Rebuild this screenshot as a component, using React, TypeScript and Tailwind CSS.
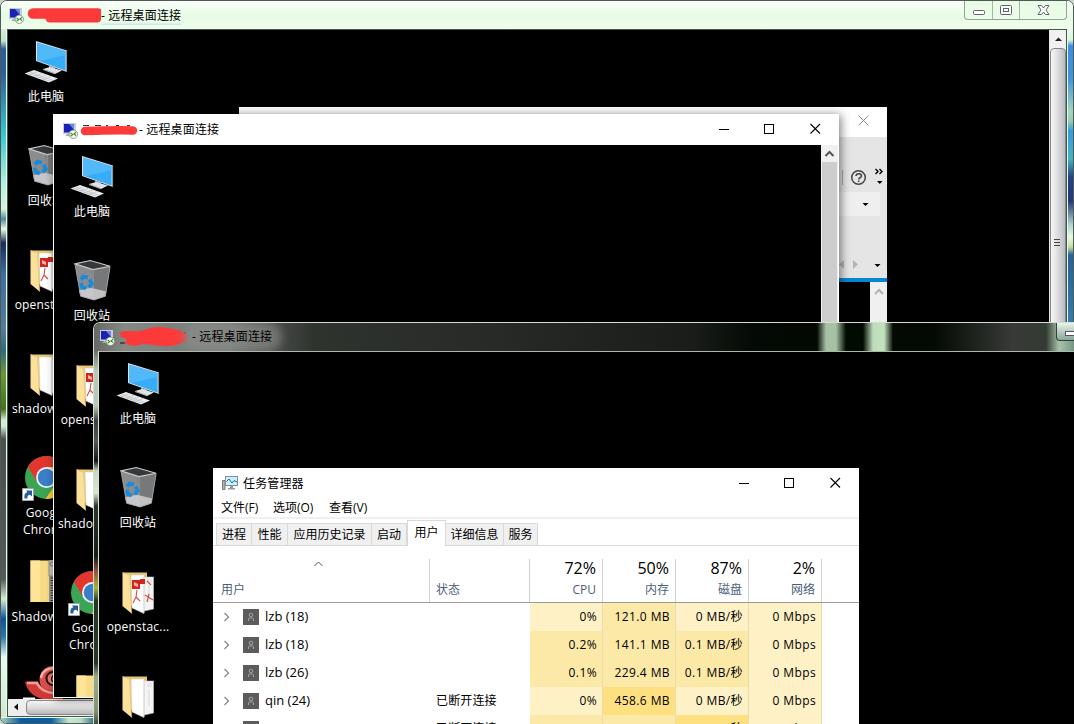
import React from "react";

const UI = "font-['Open_Sans','Noto_Sans_CJK_SC',sans-serif]";

function RdpIcon() {
  return (
    <svg width="17" height="17" viewBox="0 0 17 17" className="shrink-0">
      <rect x="1" y="1" width="13" height="11" fill="#c9ced6" />
      <rect x="2" y="2" width="10" height="8.500" fill="#1a22b5" />
      <path d="M7 2h5V8z" fill="#6f86e0" />
      <path d="M5 12h4v2H3z" fill="#a9afb8" />
      <circle cx="11.300" cy="12.300" r="4.200" fill="#f5fbf1" stroke="#7b8f74" strokeWidth=".8" />
      <path d="M8.600 11l2 1.600-2 1.600M14 10.300l-2 1.600 2 1.600" fill="none" stroke="#2f8a2b" strokeWidth="1.100" />
    </svg>
  );
}

function PcIcon() {
  return (
    <svg width="44" height="42" viewBox="0 0 44 42">
      <path d="M12 0L43 9.500V31L12 20z" fill="#d9e3ea" />
      <path d="M13 1.500L41.500 10V29.500L13 19.500z" fill="#37adf7" />
      <path d="M13 1.500L41.500 10V14L15 20.200L13 19.500z" fill="#5dbcfa" opacity=".7" />
      <path d="M42.500 9.500V31" stroke="#85929b" strokeWidth="1.200" />
      <path d="M25 24.500L31 26.500V29L25 27z" fill="#a8afb5" />
      <path d="M19 28L26 26L38 29.500L31 33z" fill="#dfe3e7" />
      <path d="M19 28L31 32V33.200L19 29z" fill="#a9afb5" />
      <path d="M0.500 32.500L10 29L34 37.500L25 41.500z" fill="#e9ecef" />
      <path d="M6 31.200L29 39.500M3.500 32L26.500 40.500M4.500 34L14 30.500M9 35.600L18.500 32.200M13.500 37.200L23 33.800M18 38.800L27.500 35.400" stroke="#b8bdc2" strokeWidth=".7" />
    </svg>
  );
}

function BinIcon() {
  return (
    <svg width="38" height="43" viewBox="0 0 40 43">
      <path d="M1 4L18 9.500L38 7L33 38L21 42L7 38z" fill="#8b8c8e" />
      <path d="M18 9.500L38 7L33 38L21 42z" fill="#77787a" />
      <path d="M1 4L17 0.500L38 6.500L20 10z" fill="#36383a" stroke="#c9cacc" strokeWidth="1.200" />
      <path d="M5 32L18 29L34 33L33 38L21 42L7 38z" fill="#dadbdd" opacity=".75" />
      <path d="M20 10V30" stroke="#a9aaac" strokeWidth=".8" />
      <path d="M1 4L7 38L21 42L33 38L38 7" fill="none" stroke="#a6a8aa" strokeWidth=".9" />
      <g fill="none" stroke="#168be0" strokeWidth="4">
        <path d="M7.500 20.500L10 17.500L14.500 18.500" />
        <path d="M16.500 20.500L18.500 25L15.500 28.500" />
        <path d="M12.500 30L8.500 28.500L7 24" />
      </g>
    </svg>
  );
}

function FolderIcon({ pdf = false }: { pdf?: boolean }) {
  return (
    <svg width="32" height="43" viewBox="0 0 32 43">
      <path d="M1 0.500H25V34H1z" fill="#e6c671" />
      <path d="M12 5L31.500 5V37L22 39L12 36z" fill="#f4f4f4" stroke="#c8c8c8" strokeWidth=".6" />
      <path d="M9 3H22V41.500L10 36z" fill="#fff" stroke="#c9c9c9" strokeWidth=".5" />
      <path d="M22 5V41M25 8H30M25 10H30M27 13V30" stroke="#d3d3d6" strokeWidth=".8" />
      {pdf && (
        <g>
          <path d="M10 8H18V17H10z" fill="#d3261c" />
          <path d="M18 7H23V12H18z" fill="#d3261c" />
          <path d="M12 10L16 12V15L12 13.500z" fill="#f5b1aa" />
          <path d="M15 18L14 25L11 31M14 25L18 29M25 9L29 13M23 23L31 28M27 22L25 30" fill="none" stroke="#d94b42" strokeWidth="1.100" />
        </g>
      )}
      <path d="M0.500 0.500L8 3L9.500 41.500L0.500 34z" fill="#fbe199" />
      <path d="M0.500 0.500L7.500 3.500L9.500 41.500" fill="none" stroke="#e7c778" strokeWidth=".8" />
    </svg>
  );
}

function ZipIcon() {
  return (
    <svg width="32" height="43" viewBox="0 0 32 43">
      <path d="M0.500 0.500H31V42H0.500z" fill="#f8db84" />
      <path d="M0.500 0.500H10V42H0.500z" fill="#fde499" />
      <path d="M19 0H26V42H19z" fill="#9b9b98" />
      <path d="M22.500 0V42" stroke="#333" strokeWidth="4" strokeDasharray="1 1.500" />
      <path d="M19 0H27V16H19z" fill="#c4c5c1" stroke="#777" strokeWidth=".7" />
      <circle cx="22" cy="4" r="2" fill="none" stroke="#777" />
    </svg>
  );
}

function ChromeIcon() {
  return (
    <svg width="48" height="46" viewBox="0 0 48 46">
      <g transform="translate(1.500 0)">
        <circle cx="23" cy="21.500" r="21.500" fill="#3aa655" />
        <path d="M4.400 10.700A21.500 21.500 0 0 1 41.700 11H24L13.500 26z" fill="#e2362f" />
        <path d="M23 11H41.700A21.500 21.500 0 0 1 22 43L33 26.500z" fill="#fbcb2c" />
        <circle cx="23" cy="21.500" r="10.500" fill="#f3f4f5" />
        <circle cx="23" cy="21.500" r="8.700" fill="#3b7fc9" />
      </g>
      <path d="M0.500 32.500H11.500V44.500H0.500z" fill="#fff" stroke="#9fa3a8" />
      <path d="M2.500 42.500C2 38 3.500 36.500 5.500 36.500L4 34.500H10V40.500L8 38.700C6 38.700 5 40 5.500 42.500z" fill="#245d9f" />
    </svg>
  );
}

function SnailIcon() {
  return (
    <svg width="46" height="46" viewBox="0 0 46 46">
      <circle cx="30" cy="13.500" r="13.500" fill="#d8504c" />
      <path d="M18 12C19 5 25 1.500 32 2.500" fill="none" stroke="#f3b1ad" strokeWidth="2.500" />
      <circle cx="30" cy="12.500" r="6.500" fill="#e87d78" stroke="#270c0b" strokeWidth="2" />
      <path d="M32 9A4 4 0 0 0 30 16" fill="none" stroke="#270c0b" strokeWidth="1.500" />
      <path d="M2 15.500H15C17 21 22 25 40 25V34C20 36 5 31 2 15.500z" fill="#cf3a37" />
      <path d="M4 17H14C17 24 25 28 40 28" fill="none" stroke="#f19b96" strokeWidth="2.500" />
      <path d="M0 31.500H12V44H0z" fill="#fff" />
      <path d="M3 35H9V41" fill="none" stroke="#245d9f" strokeWidth="2" />
    </svg>
  );
}

type Item = { icon: React.ReactNode; label: string; second?: string; pad: string };

const items: Item[] = [
  { icon: <PcIcon />, label: "此电脑", pad: "pt-[11px] pr-px" },
  { icon: <BinIcon />, label: "回收站", pad: "pt-[10px] pl-px" },
  { icon: <FolderIcon pdf />, label: "openstac...", pad: "pt-[12px]" },
  { icon: <FolderIcon />, label: "shadowso...", pad: "pt-[12px]" },
  { icon: <ChromeIcon />, label: "Google", second: "Chrome", pad: "pt-[10px]" },
  { icon: <ZipIcon />, label: "Shadowso...", pad: "pt-[10px]" },
  { icon: <SnailIcon />, label: "", pad: "pt-[12px]" },
];

function Desktop() {
  return (
    <div className="flex w-[76px] shrink-0 flex-col">
      {items.map((it, i) => (
        <div key={i} className="flex h-[104px] shrink-0 flex-col items-center">
          <div className={"flex h-[58px] shrink-0 justify-center " + it.pad}>{it.icon}</div>
          <div className="text-center text-[12px] leading-[17px] tracking-[0.2px] whitespace-nowrap text-white">
            {it.label}
            {it.second && <div>{it.second}</div>}
          </div>
        </div>
      ))}
    </div>
  );
}

function WinButtons() {
  return (
    <svg width="102" height="12" viewBox="0 0 102 12" className="shrink-0" fill="none" stroke="#000" shapeRendering="crispEdges">
      <path d="M0 6.500H10M45.500 1.500H54.500V10.500H45.500z" />
      <path d="M91.500 1L101 10.500M101 1L91.500 10.500" shapeRendering="auto" strokeWidth="1.100" />
    </svg>
  );
}

function OuterWindow() {
  return (
    <div className="absolute top-0 left-0 flex h-[724px] w-[1074px] flex-col overflow-hidden rounded-[7px] border border-[#4e5a54] bg-[#e6fbe4]">
      <div className="flex h-[28px] shrink-0 bg-gradient-to-b from-[#fbfffa] via-[#e8fbe6] to-[#effdeb] pl-[7px]">
        <div className="flex flex-1 items-center">
          <RdpIcon />
          <svg width="76" height="18" className="shrink-0">
            <path d="M8 7.500H73" stroke="#fd3a3a" strokeWidth="10.500" strokeLinecap="round" />
            <path d="M25 12H72" stroke="#fd3a3a" strokeWidth="9" strokeLinecap="round" />
          </svg>
          <span className="mt-px bg-[linear-gradient(transparent_85%,#c5e2ef)] text-[12px] tracking-[0.15px] whitespace-pre text-black">- 远程桌面连接</span>
        </div>
        <div className="mr-[6px] flex h-[19px] w-[103px] rounded-b-[4px] border border-t-0 border-[#93a396] bg-[#eafbe8]">
          <svg width="101" height="18" viewBox="0 0 101 18" fill="none" stroke="#5e6568">
            <path d="M27.500 0V18M54.500 0V18" stroke="#a6b5a8" />
            <rect x="8.500" y="9.500" width="11" height="4" rx="1" fill="#fff" />
            <rect x="35.500" y="4.500" width="11" height="9" rx="1" fill="#fff" />
            <rect x="38.500" y="7.500" width="5" height="3" />
            <path d="M73 4.500H76.500L78.500 7L80.500 4.500H84L81 9L84 13.500H80.500L78.500 11L76.500 13.500H73L76 9z" fill="#fff" />
          </svg>
        </div>
      </div>
      <div className="flex min-h-0 flex-1">
        <div className="w-[6px] shrink-0 border-r border-[#dfffee] bg-[linear-gradient(#d8efd5_0px,#c7e0cc_12px,#2d5c9b_20px,#315e99_45px,#38c7ce_105px,#b7eee2_155px,#d8f4df_180px,#4e8b9d_190px,#edfbe8_200px,#1c2b5b_214px,#3e6da4_245px,#557d99_300px,#2d6c77_322px,#6d9835_345px,#457219_380px,#d9ead0_391px,#d8ecd4_397px,#4d504f_410px,#555957_550px,#d9ecd2_570px,#0a539f_590px,#3077a9_608px,#e7faf0_628px,#d4e7cb_690px)]" />
        <div className="flex min-w-0 flex-1 flex-col border border-[#42564c]">
          <div className="flex min-h-0 flex-1 overflow-hidden bg-black">
            <Desktop />
            <div className="flex-1" />
            <div className="flex w-[17px] flex-col border-l border-[#e4e4e4] bg-[#f1f1f1]">
              <svg width="16" height="18"><path d="M5 11L8.500 7.500L12 11z" fill="#222" /></svg>
              <div className="flex flex-1 flex-col rounded-sm border border-[#858585] bg-gradient-to-r from-[#f7f7f7] via-[#dcdcde] to-[#b8bbc3] pt-[190px]">
                <svg width="14" height="10" stroke="#454545"><path d="M3 .5H9M3 3.500H9M3 6.500H9" /></svg>
              </div>
            </div>
          </div>
          <div className="flex h-[17px] shrink-0 bg-[#eeeeee]">
            <svg width="18" height="16"><path d="M10 4.500V11.500L6 8z" fill="#111" /></svg>
            <div className="my-px flex-1 rounded-sm border border-[#898989] bg-gradient-to-b from-[#f4f4f4] via-[#dcdcdc] to-[#b8b8b8]" />
          </div>
        </div>
        <div className="w-[6px] shrink-0 border-l border-[#dfffee] bg-[linear-gradient(#e6fbe2_0px,#dcf4d9_11px,#438dde_17px,#3f92dc_48px,#a4d4bf_82px,#9bcab4_92px,#379cdc_102px,#49b1c2_130px,#244384_148px,#263876_172px,#b2d3cf_196px,#e8fae4_208px,#c9d9a5_218px,#296198_226px,#347dac_295px)]" />
      </div>
      <div className="h-[6px] shrink-0 border-t border-[#dfffee] bg-[linear-gradient(90deg,#a9cfbd,#0a5d9e_20px,#0a5f9f_50px,#cbe7cc_68px,#bedcc4_80px,#225d88_95px)]" />
    </div>
  );
}

function BackWindow() {
  return (
    <div className="absolute top-[107px] left-[239px] flex h-[230px] w-[648px] flex-col bg-white">
      <div className="flex h-[30px] shrink-0 items-center justify-end bg-white pr-[18px] pb-[3px]">
        <svg width="11" height="11" stroke="#8e8e8e"><path d="M.5.500L10.500 10.500M10.500.500L.5 10.500" /></svg>
      </div>
      <div className="flex h-[141px] shrink-0 justify-end bg-[#e5e5e5]">
        <svg width="50" height="141" viewBox="0 0 50 141">
          <path d="M5.500 33V48" stroke="#aaa" />
          <circle cx="21.500" cy="40.500" r="6.800" fill="none" stroke="#444" strokeWidth="1.500" />
          <path d="M19 39C19 36 24.500 36 24.500 39C24.500 41 21.700 40.500 21.700 42.500M21.700 43.500V45" fill="none" stroke="#444" strokeWidth="1.500" />
          <path d="M38.500 32L41 34.500L38.500 37M42.500 32L45 34.500L42.500 37" fill="none" stroke="#000" strokeWidth="1.400" />
          <path d="M40 44H45.500L42.800 47z" fill="#000" />
          <path d="M0 55H43V79H0z" fill="#efefef" />
          <path d="M25.500 66H31.500L28.500 69zM37.500 127H43.500L40.500 130z" fill="#000" />
          <path d="M7 123V132L2 127.500zM16 123V132L21 127.500z" fill="#b5b5b5" />
        </svg>
      </div>
      <div className="h-[4px] shrink-0 bg-[#0786d8]" />
      <div className="flex flex-1 justify-end bg-black">
        <div className="flex w-[17px] justify-center bg-[#f0f0f0] pt-[6px]">
          <svg width="10" height="8" fill="none" stroke="#b2b2b2" strokeWidth="2"><path d="M1 6L5 2L9 6" /></svg>
        </div>
      </div>
    </div>
  );
}

function MiddleWindow() {
  return (
    <div className="absolute top-[114px] left-[53px] flex h-[584px] w-[786px] flex-col border border-white bg-white shadow-[2px_1px_9px_rgba(0,0,0,0.5)]">
      <div className="flex h-[30px] shrink-0 items-center pr-[17px] pl-[8px]">
        <RdpIcon />
        <svg width="60" height="18" className="shrink-0">
          <path d="M4 4.500H10M16 4.500H22M27 4.500H29M37 4.500H40M48 4.500H51" stroke="#333" />
          <path d="M6 10C20 10 38 8.500 54 9.500" fill="none" stroke="#fd3a3a" strokeWidth="8.500" strokeLinecap="round" />
        </svg>
        <span className="flex-1 text-[12px] tracking-[0.15px] whitespace-pre text-black">- 远程桌面连接</span>
        <div className="mb-[2px] flex"><WinButtons /></div>
      </div>
      <div className="flex min-h-0 flex-1 bg-black">
        <div className="flex flex-1 overflow-hidden">
          <Desktop />
        </div>
        <div className="flex w-[17px] flex-col bg-[#f0f0f0]">
          <svg width="17" height="17" fill="none" stroke="#555" strokeWidth="2"><path d="M4.500 11L8.500 7L12.500 11" /></svg>
          <div className="mx-px flex-1 bg-[#cdcdcd]" />
        </div>
      </div>
    </div>
  );
}

const tabs = [
  { name: "进程", w: "w-[36px]" },
  { name: "性能", w: "w-[36px]" },
  { name: "应用历史记录", w: "w-[84px]" },
  { name: "启动", w: "w-[35px]" },
  { name: "用户", w: "w-[39px]", on: true },
  { name: "详细信息", w: "w-[58px]" },
  { name: "服务", w: "w-[34px]" },
];

const L = "bg-[#fff1c6]";
const M = "bg-[#fce9a8]";
const D = "bg-[#ffe080]";

const rows = [
  { name: "lzb (18)", state: "", v: ["0%", "121.0 MB", "0 MB/秒", "0 Mbps"], c: [L, M, L, L] },
  { name: "lzb (18)", state: "", v: ["0.2%", "141.1 MB", "0.1 MB/秒", "0 Mbps"], c: [M, M, M, L] },
  { name: "lzb (26)", state: "", v: ["0.1%", "229.4 MB", "0.1 MB/秒", "0 Mbps"], c: [M, M, M, L] },
  { name: "qin (24)", state: "已断开连接", v: ["0%", "458.6 MB", "0 MB/秒", "0 Mbps"], c: [L, D, L, L] },
  { name: "qin (24)", state: "已断开连接", v: ["0.1%", "200.1 MB", "0.3 MB/秒", "0 Mbps"], c: [M, M, D, L] },
];

const totals = [
  ["72%", "CPU"],
  ["50%", "内存"],
  ["87%", "磁盘"],
  ["2%", "网络"],
];

function TaskManager() {
  return (
    <div className="absolute top-[116px] left-[114px] flex h-[300px] w-[646px] flex-col bg-white text-black">
      <div className="flex h-[31px] shrink-0 items-center pr-[18px] pl-[9px]">
        <svg width="17" height="15" viewBox="0 0 17 15" className="shrink-0">
          <path d="M.5 4.500H3V13.500H.5z" fill="#b5b5b5" stroke="#777" />
          <rect x="3.500" y=".5" width="12" height="9" fill="#cceefa" stroke="#82909a" />
          <path d="M4.500 5.500L7 3L10 7L12 4.500L15 6" fill="none" stroke="#19719a" />
          <path d="M8 10H11V12H13V13.500H6V12H8z" fill="#999" />
        </svg>
        <span className="ml-[4px] flex-1 text-[12px] tracking-[0.15px]">任务管理器</span>
        <div className="mb-px flex"><WinButtons /></div>
      </div>
      <div className="flex h-[20px] shrink-0 items-center gap-[14px] border-b-2 border-[#f0f0f0] pl-[8px] text-[12px]">
        <span className="w-[38px] whitespace-nowrap">文件(F)</span>
        <span className="w-[42px] whitespace-nowrap">选项(O)</span>
        <span className="whitespace-nowrap">查看(V)</span>
      </div>
      <div className="flex h-[27px] shrink-0 items-end border-b border-[#d9d9d9] pl-[3px] text-[12px]">
        {tabs.map((t) => (
          <div
            key={t.name}
            className={
              "flex shrink-0 items-center justify-center border border-b-0 whitespace-nowrap border-[#d9d9d9] " +
              t.w +
              (t.on ? " mb-[-1px] h-[26px] bg-white pb-[2px]" : " h-[22px] border-l-0 bg-[#f0f0f0] first:border-l")
            }
          >
            {t.name}
          </div>
        ))}
      </div>
      <div className="flex h-[57px] shrink-0 border-b border-[#9b9b9b] pt-[13px] text-[12px] text-[#4c607a]">
        <div className="flex w-[217px] flex-col border-r border-[#d2d2d2]">
          <svg width="9" height="6" className="mt-[2px] ml-[101px]" fill="none" stroke="#555"><path d="M.5 5L4.500 1L8.500 5" /></svg>
          <span className="mt-[14px] pl-[8px] leading-[18px]">用户</span>
        </div>
        <div className="w-[100px] border-r border-[#d2d2d2] pt-[22px] pl-[6px] leading-[18px]">状态</div>
        {totals.map(([n, l]) => (
          <div key={l} className="flex w-[73px] flex-col items-end border-r border-[#d2d2d2] pr-[6px]">
            <span className="text-[16px] leading-[18px] text-black">{n}</span>
            <span className="mt-[4px] leading-[18px]">{l}</span>
          </div>
        ))}
      </div>
      {rows.map((r, i) => (
        <div key={i} className="flex h-[28px] shrink-0 items-stretch text-[12px]">
          <div className="flex w-[217px] items-center pl-[10px]">
            <svg width="8" height="10" fill="none" stroke="#8a8a8a" strokeWidth="1.300"><path d="M1.500 1L5.500 5L1.500 9" /></svg>
            <svg width="16" height="16" viewBox="0 0 16 16" className="ml-[12px]">
              <path d="M0 0H16V16H0z" fill="#5c5c5c" />
              <circle cx="8" cy="6" r="1.800" fill="none" stroke="#b5b5b5" strokeWidth=".8" />
              <path d="M5.500 12V10C5.500 8.500 10.500 8.500 10.500 10V12" fill="none" stroke="#b5b5b5" strokeWidth=".8" />
            </svg>
            <span className="ml-[6px] text-[13px]">{r.name}</span>
          </div>
          <div className="flex w-[99px] items-center pl-[6px] tracking-[0.15px]">{r.state}</div>
          {r.v.map((v, k) => (
            <div key={k} className={"flex w-[73px] items-center justify-end border-r border-[#e9dcae] pr-[5px] tracking-[0.4px] whitespace-nowrap " + r.c[k] + (k === 0 ? " ml-px" : "")}>
              {v}
            </div>
          ))}
        </div>
      ))}
    </div>
  );
}

function FrontWindow() {
  return (
    <div className="absolute top-[322px] left-[93px] flex h-[402px] w-[981px] flex-col overflow-hidden rounded-tl-[7px] border-t border-l border-[#d4ddd6] bg-black">
      <div className="flex h-[28px] shrink-0 items-center bg-[linear-gradient(90deg,#656865_0px,#858985_30px,#7c807c_80px,#777b77_135px,#4a4d49_178px,#2f332e_220px,#272a27_400px,#191c18_600px,#030904_660px,#020902_723px,#a6c1a4_732px,#a6c1a4_742px,#020b02_752px,#020b02_769px,#bddcbb_779px,#c3e2bf_790px,#020a02_799px,#030903_840px,#373a36_918px,#343a34_952px,#a8c3a9_965px,#799686)] pl-[5px]">
        <RdpIcon />
        <svg width="72" height="26" className="shrink-0">
          <path d="M4 19H9M69 8V14" stroke="#111" />
          <path d="M4 9C7 5 18 9 28 6C40 1 49 3 61 6C72 7 76 17 63 20C52 24 40 21 27 20C15 24 11 20 8 18C14 16 9 14 5 13z" fill="#fd3a3a" />
        </svg>
        <span className="rounded-full bg-[#8d908c]/60 px-1 text-[12px] tracking-[0.15px] whitespace-pre text-black shadow-[0_0_9px_6px_rgba(141,144,140,0.6)]">- 远程桌面连接</span>
        <div className="ml-auto flex h-[18px] w-[18px] self-start rounded-bl-[4px] border-b border-l border-[#334039] bg-gradient-to-b from-[#eaf4ea] to-[#8aa69a] pt-[8px] pl-[8px]">
          <div className="h-[5px] w-[9px] border border-r-0 border-[#556] bg-white" />
        </div>
      </div>
      <div className="flex min-h-0 flex-1">
        <div className="w-[5px] shrink-0 border-r border-[#dbe4db] bg-[linear-gradient(#6d706d_0px,#b7cab6_20px,#b7cab6_55px,#3c403c_70px,#545854_90px,#131713_110px,#c3d9bf_120px,#d5e8d0_142px,#2c372d_155px,#151c15_205px,#8b4b3c_219px,#a9b436_237px,#253825_250px,#253825_312px,#9cad83_326px,#819174_360px,#3f4e3b)]" />
        <div className="relative flex min-w-0 flex-1 overflow-hidden border-t border-[#aeb7ae] bg-black pl-px">
          <Desktop />
          <TaskManager />
        </div>
      </div>
    </div>
  );
}

export default function App() {
  return (
    <main className={"relative h-[724px] w-[1074px] overflow-hidden bg-[#cdd5c9] " + UI}>
      <OuterWindow />
      <BackWindow />
      <MiddleWindow />
      <FrontWindow />
    </main>
  );
}
